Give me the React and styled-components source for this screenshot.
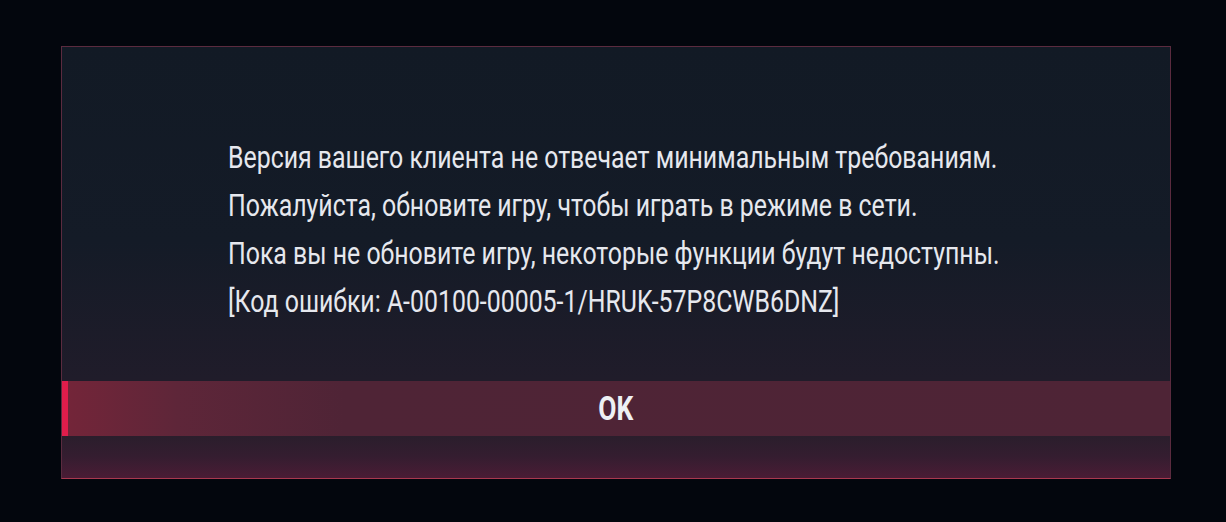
import React from "react";
import styled, { createGlobalStyle } from "styled-components";

const Global = createGlobalStyle`
  html, body {
    margin: 0;
    padding: 0;
    background: #03060d;
  }
  body {
    font-family: Roboto, "Liberation Sans", sans-serif;
  }
`;

const Screen = styled.div`
  width: 1226px;
  height: 522px;
  box-sizing: border-box;
  padding: 46px 55px 43px 61px;
  display: flex;
`;

const Dialog = styled.div`
  flex: 1;
  min-width: 0;
  overflow: hidden;
  display: flex;
  flex-direction: column;
  border: 1px solid #5b2b3f;
  border-bottom-color: #a8384f;
  background: linear-gradient(180deg, #121a25 0%, #141b27 45%, #201c2a 77%, #211c2a 100%);
`;

const Body = styled.div`
  flex: 1;
  min-height: 0;
  padding: 86px 0 0 166px;
  display: flex;
  flex-direction: column;
  align-items: flex-start;
`;

/* the game font is a condensed grotesque: Roboto squeezed horizontally */
const Line = styled.p`
  margin: 0;
  color: #e6e8ee;
  font-size: 32px;
  line-height: 48px;
  white-space: nowrap;
  transform: scaleX(0.777);
  transform-origin: left center;
`;

const OkButton = styled.button`
  height: 55px;
  margin: 0;
  padding: 0;
  border: none;
  border-left: 6px solid #e01d4b;
  background: linear-gradient(90deg, #732539 0%, #5e2639 10%, #4f2436 25%, #4e2436 100%);
  color: #eef0f4;
  font-family: inherit;
  cursor: pointer;
`;

const OkLabel = styled.span`
  display: inline-block;
  font-weight: 700;
  font-size: 33px;
  transform: scaleX(0.8);
  margin-left: -6px;
`;

const Footer = styled.div`
  height: 42px;
  background: linear-gradient(180deg, #2a1e2c 0%, #351d30 50%, #4a1c35 100%);
`;

const lines = [
  "Версия вашего клиента не отвечает минимальным требованиям.",
  "Пожалуйста, обновите игру, чтобы играть в режиме в сети.",
  "Пока вы не обновите игру, некоторые функции будут недоступны.",
  "[Код ошибки: A-00100-00005-1/HRUK-57P8CWB6DNZ]",
];

export default function App() {
  return (
    <>
      <Global />
      <Screen>
        <Dialog>
          <Body>
            {lines.map((t) => (
              <Line key={t}>{t}</Line>
            ))}
          </Body>
          <OkButton>
            <OkLabel>OK</OkLabel>
          </OkButton>
          <Footer />
        </Dialog>
      </Screen>
    </>
  );
}
